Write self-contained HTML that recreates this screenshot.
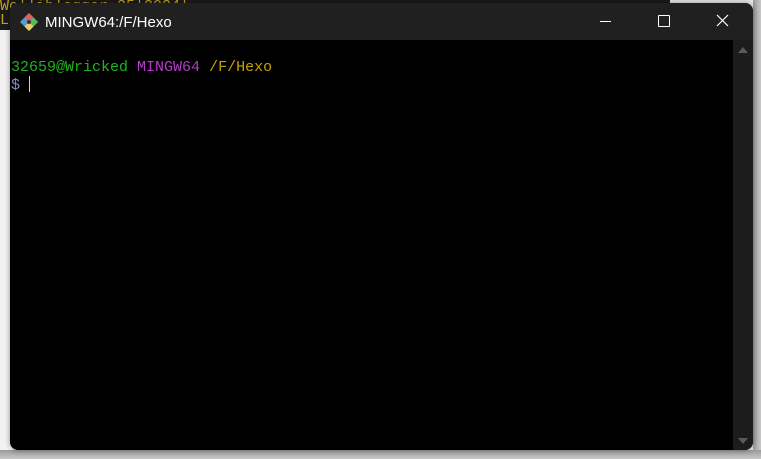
<!DOCTYPE html>
<html><head><style>
body{margin:0;width:761px;height:459px;overflow:hidden;position:relative;background:#e8e8e8;font-family:"Liberation Sans",sans-serif}
.bgtop{position:absolute;left:0;top:0;width:670px;height:30px;background:#1a1a1a;color:#c8a020;font:15px "Liberation Mono",monospace;line-height:14px;overflow:hidden;white-space:pre}
.shade{position:absolute;left:0;top:30px;width:12px;height:429px;background:#f2f2f2}
.rshade{position:absolute;left:753px;top:0;width:8px;height:459px;background:linear-gradient(90deg,#9a9a9a,#c8c8c8)}
.bshade{position:absolute;left:0;top:450px;width:761px;height:9px;background:linear-gradient(#9a9a9a,#c8c8c8)}
.win{position:absolute;left:10px;top:3px;width:743px;height:447px;background:#000;border-radius:8px;overflow:hidden;box-shadow:0 0 6px rgba(0,0,0,.4)}
.title{position:absolute;left:0;top:0;width:743px;height:37px;background:#202020;color:#fff;font-size:15px}
.title span{position:absolute;left:35px;top:11px}
.sb{position:absolute;right:0;top:37px;width:20px;height:410px;background:#1c1c1c}
.term{position:absolute;left:1px;top:56px;font:15px "Liberation Mono",monospace;line-height:17px;white-space:pre}
</style></head><body>
<div class="bgtop">Wo|liblogger 35|2024|
Lo</div>
<div class="shade"></div>
<div class="rshade"></div>
<div class="bshade"></div>
<div class="win">
<div class="title">
<svg style="position:absolute;left:9px;top:9px" width="20" height="20" viewBox="0 0 20 20">
<polygon points="10,1 19,10 10,19 1,10" fill="#5b9bd5"/>
<polygon points="10,1 14.5,5.5 10,10 5.5,5.5" fill="#e06060"/>
<polygon points="14.5,5.5 19,10 14.5,14.5 10,10" fill="#5cb85c"/>
<polygon points="10,10 14.5,14.5 10,19 5.5,14.5" fill="#e8d060"/>
<circle cx="10" cy="10" r="2" fill="#333"/>
</svg>
<span>MINGW64:/F/Hexo</span>
<div style="position:absolute;left:590px;top:18px;width:11px;height:1px;background:#fff"></div>
<div style="position:absolute;left:648px;top:12px;width:10px;height:10px;border:1px solid #fff;border-radius:1px"></div>
<svg style="position:absolute;left:706px;top:11px" width="13" height="13"><path d="M1 1L12 12M12 1L1 12" stroke="#fff" stroke-width="1.2"/></svg>
</div>
<div class="sb">
<div style="position:absolute;left:5px;top:7px;border:5px solid transparent;border-bottom:6px solid #5a5a5a;border-top:0"></div>
<div style="position:absolute;left:5px;bottom:6px;border:5px solid transparent;border-top:6px solid #5a5a5a;border-bottom:0"></div>
</div>
<div class="term"><span style="color:#1fb41f">32659@Wricked</span> <span style="color:#b43cc8">MINGW64</span> <span style="color:#c8a000">/F/Hexo</span>
<span style="color:#8090c0">$</span> <span style="display:inline-block;width:1px;height:16px;background:#ccc;vertical-align:-3px"></span></div>
</div>
</body></html>
